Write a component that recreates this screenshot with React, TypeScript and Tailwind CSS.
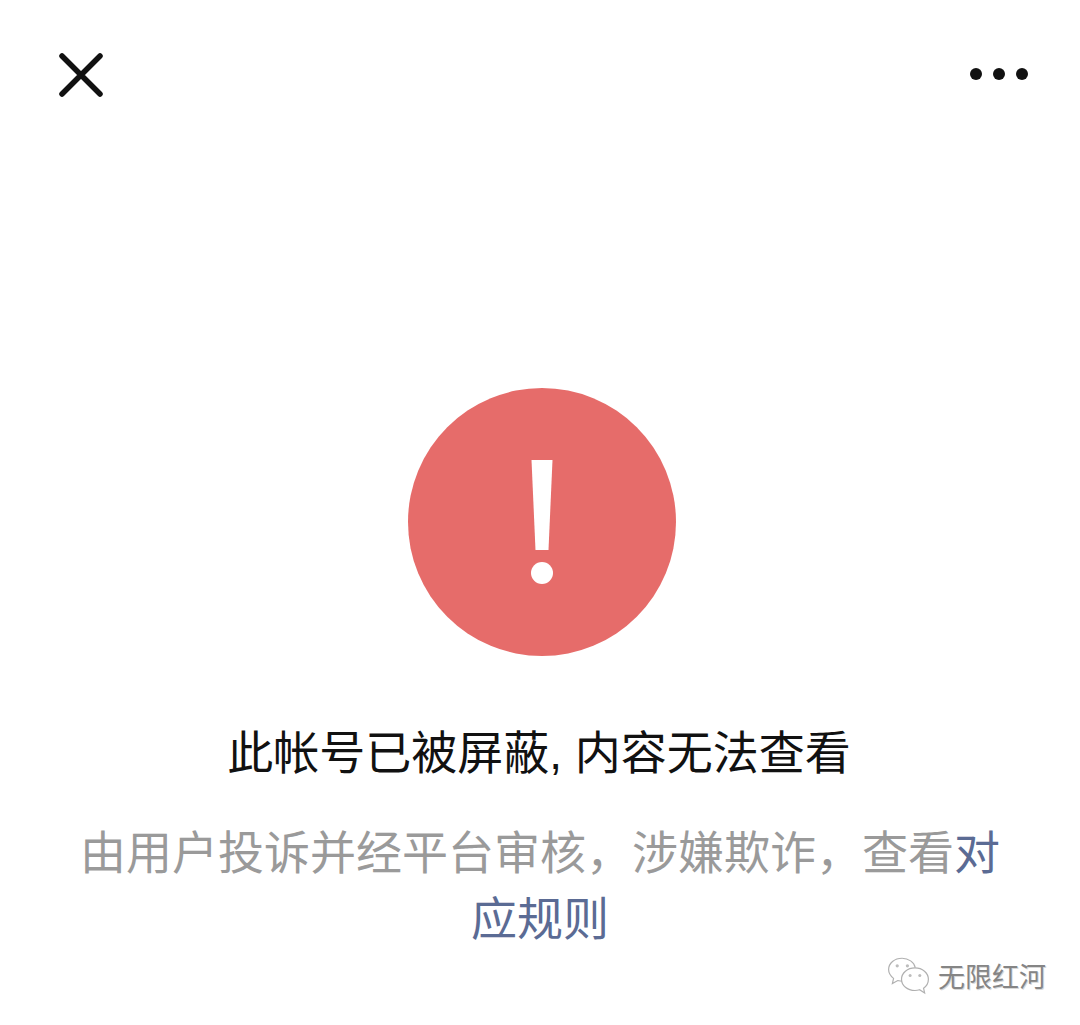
const cjk = "font-['Liberation_Sans','Noto_Sans_CJK_SC',sans-serif]";

function WeChatMark() {
  return (
    <svg width="43" height="40" viewBox="0 0 40 36" fill="none" stroke="#b0b0b0" strokeWidth="1.100">
      <path d="M14 1.500C7 1.500 1.500 6 1.500 12c0 3.500 2 6.200 4.600 8.200L5 25l5-2.800c1.500.4 2.800.6 4.500.6" fill="#fff" />
      <path d="M14 1.500c6 0 11.200 3.600 12.300 8.600" />
      <circle cx="9.500" cy="8.500" r="1.500" fill="#bdbdbd" stroke="none" />
      <circle cx="19" cy="8.500" r="1.500" fill="#bdbdbd" stroke="none" />
      <path d="M26 10.500c-7 0-12.500 4.600-12.500 10.500S19 31.500 26 31.500c1.600 0 3-.3 4.300-.7l4.700 3-1-4.500c3-2 4.500-4.800 4.500-8.300 0-5.900-5.500-10.500-12.500-10.500z" fill="#fff" />
      <circle cx="21.500" cy="17.500" r="1.400" fill="#bdbdbd" stroke="none" />
      <circle cx="30.500" cy="17.500" r="1.400" fill="#bdbdbd" stroke="none" />
    </svg>
  );
}

export default function App() {
  return (
    <div className={`relative flex h-[1025px] w-[1080px] flex-col items-center overflow-hidden bg-white ${cjk}`}>
      <header className="flex h-[388px] w-full items-start justify-between pl-[59px] pr-[52px] pt-[53px]">
        <svg width="44" height="44" viewBox="0 0 44 44" fill="none" stroke="#111" strokeWidth="5.500" strokeLinecap="round">
          <path d="M3 3 41 41M41 3 3 41" />
        </svg>
        <div className="mt-[15px] flex gap-[11px]">
          <span className="h-[12px] w-[12px] rounded-full bg-[#111]" />
          <span className="h-[12px] w-[12px] rounded-full bg-[#111]" />
          <span className="h-[12px] w-[12px] rounded-full bg-[#111]" />
        </div>
      </header>

      <div className="ml-[4px] flex h-[268px] w-[268px] shrink-0 flex-col items-center rounded-full bg-[#e66c6a] pt-[72px]">
        <svg width="24" height="124" viewBox="0 0 24 124" fill="#fff">
          <path d="M1.500 0h21l-4 90h-13z" />
          <circle cx="12" cy="113" r="11" />
        </svg>
      </div>

      <h1 className="mt-[66px] mr-[2px] text-[46px] font-normal leading-[62px] text-[#111] whitespace-nowrap">
        此帐号已被屏蔽, 内容无法查看
      </h1>

      <p className="mt-[36px] w-[920px] text-center text-[46px] leading-[66px] text-[#9a9a9a]">
        由用户投诉并经平台审核，涉嫌欺诈，查看<span className="text-[#5b6b94]">对应规则</span>
      </p>

      <div className="absolute left-[887px] top-[956px] flex items-center gap-[8px]">
        <WeChatMark />
        <span className="mt-[3px] text-[27px] leading-[36px] text-[#858585] [text-shadow:1px_1px_0_#d8d8d8]">无限红河</span>
      </div>
    </div>
  );
}
